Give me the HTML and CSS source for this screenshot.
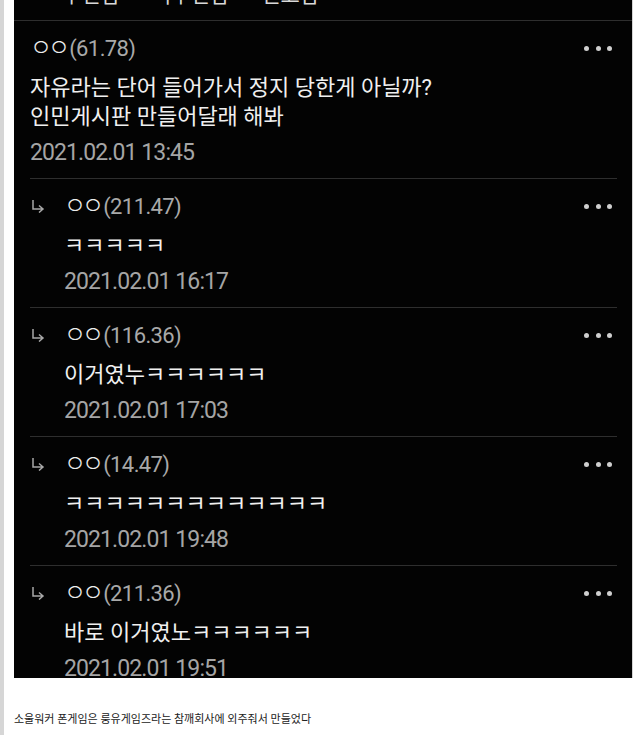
FILE: index.html
```html
<!DOCTYPE html>
<html lang="ko">
<head>
  <meta charset="UTF-8" />
  <meta name="viewport" content="width=device-width, initial-scale=1.0"/>
  <title>댓글 캡처</title>
  <link rel="stylesheet" href="styles.css">
</head>
<body>
  <div class="page">

    <div class="shot">
      <div class="actions">
        <span class="act">추천함</span>
        <span class="act">비추천함</span>
        <span class="act">신고함</span>
      </div>

      <div class="comment">
        <div class="body">
          <div class="head">
            <span class="name"><span class="nick">ㅇㅇ</span>(61.78)</span>
            <span class="more"><i></i><i></i><i></i></span>
          </div>
          <p class="text">자유라는 단어 들어가서 정지 당한게 아닐까?<br>인민게시판 만들어달래 해봐</p>
          <p class="date">2021.02.01 13:45</p>
        </div>
      </div>

      <div class="comment reply">
        <div class="arrow">
          <svg width="14" height="14" viewBox="0 0 14 14"><path d="M2 1V10H12M8 6.5L12 10L8 13.5"/></svg>
        </div>
        <div class="body">
          <div class="head">
            <span class="name"><span class="nick">ㅇㅇ</span>(211.47)</span>
            <span class="more"><i></i><i></i><i></i></span>
          </div>
          <p class="text">ㅋㅋㅋㅋㅋ</p>
          <p class="date">2021.02.01 16:17</p>
        </div>
      </div>

      <div class="comment reply">
        <div class="arrow">
          <svg width="14" height="14" viewBox="0 0 14 14"><path d="M2 1V10H12M8 6.5L12 10L8 13.5"/></svg>
        </div>
        <div class="body">
          <div class="head">
            <span class="name"><span class="nick">ㅇㅇ</span>(116.36)</span>
            <span class="more"><i></i><i></i><i></i></span>
          </div>
          <p class="text">이거였누ㅋㅋㅋㅋㅋㅋ</p>
          <p class="date">2021.02.01 17:03</p>
        </div>
      </div>

      <div class="comment reply">
        <div class="arrow">
          <svg width="14" height="14" viewBox="0 0 14 14"><path d="M2 1V10H12M8 6.5L12 10L8 13.5"/></svg>
        </div>
        <div class="body">
          <div class="head">
            <span class="name"><span class="nick">ㅇㅇ</span>(14.47)</span>
            <span class="more"><i></i><i></i><i></i></span>
          </div>
          <p class="text">ㅋㅋㅋㅋㅋㅋㅋㅋㅋㅋㅋㅋㅋ</p>
          <p class="date">2021.02.01 19:48</p>
        </div>
      </div>

      <div class="comment reply">
        <div class="arrow">
          <svg width="14" height="14" viewBox="0 0 14 14"><path d="M2 1V10H12M8 6.5L12 10L8 13.5"/></svg>
        </div>
        <div class="body">
          <div class="head">
            <span class="name"><span class="nick">ㅇㅇ</span>(211.36)</span>
            <span class="more"><i></i><i></i><i></i></span>
          </div>
          <p class="text">바로 이거였노ㅋㅋㅋㅋㅋㅋ</p>
          <p class="date">2021.02.01 19:51</p>
        </div>
      </div>
    </div>

    <p class="caption">소울워커 폰게임은 룽유게임즈라는 참깨회사에 외주줘서 만들었다</p>

  </div>
</body>
</html>
```

FILE: styles.css
```css
* { box-sizing: border-box; }
body {
  margin: 0;
  background: #fff;
  font-family: Roboto, "Noto Sans CJK KR", sans-serif;
}

.page {
  min-height: 100vh;
  border-left: 4px solid #d6d6d6;
  padding-left: 10px;
}

/* captured app screen */
.shot {
  width: 619px;
  height: 678px;
  overflow: hidden;
  background: #030303;
  border-right: 1px solid #d4d4d4;
}

.actions {
  height: 21px;
  border-bottom: 1px solid #2e2e2e;
  overflow: hidden;
  display: flex;
  gap: 32px;
  padding-left: 48px;
}

.act {
  margin-top: -15px;
  line-height: 20px;
  height: 20px;
  font-size: 21px;
  color: #d8d8d8;
}

.comment {
  display: flex;
  margin: 0 15px 0 16px;
  padding: 13px 0 11px;
}

.comment + .comment {
  border-top: 1px solid #2e2e2e;
}

.body {
  flex: 1;
}

.arrow {
  flex: none;
  width: 34px;
  padding: 7px 0 0 1px;
}

.arrow svg {
  display: block;
  fill: none;
  stroke: #a8a8a8;
  stroke-width: 1.5;
}

.head {
  display: flex;
  align-items: center;
  justify-content: space-between;
  height: 28px;
}

.name {
  font-size: 22px;
  line-height: 28px;
  color: #a9a9a9;
  letter-spacing: -0.6px;
}

.nick {
  font-size: 24px;
  font-weight: 300;
  letter-spacing: -4px;
  margin-right: 3px;
  color: #ececec;
}

.more {
  display: flex;
  gap: 6.5px;
  margin-right: 5px;
}

.more i {
  width: 5px;
  height: 5px;
  border-radius: 50%;
  background: #cfcfcf;
}

.text {
  margin: 11px 0 0;
  font-size: 22px;
  line-height: 29px;
  color: #f0f0f0;
}

.date {
  margin: 8px 0 0;
  font-size: 23px;
  line-height: 28px;
  color: #a5a5a5;
  letter-spacing: -0.9px;
}

.caption {
  margin: 34px 0 0;
  font-size: 11px;
  line-height: 16px;
  color: #222;
}
```
